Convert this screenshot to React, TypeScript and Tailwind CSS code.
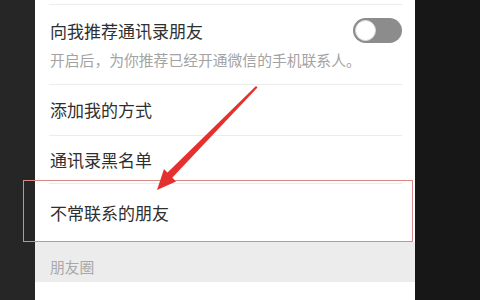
import React from "react";

const font = { fontFamily: '"Noto Sans CJK SC", "Noto Sans", sans-serif' };

function Divider() {
  return <div className="h-px bg-[#ececec] ml-[14px] mr-[13px]" />;
}

function Toggle() {
  return (
    <div className="w-[49px] h-[25px] rounded-full bg-[#8c8c8c] flex items-center px-[2px]">
      <div className="w-[21px] h-[21px] rounded-full bg-white border border-[#dcdcdc]" />
    </div>
  );
}

function Row({ label, className }: { label: string; className: string }) {
  return (
    <div className={`flex items-center pl-[15px] text-[17px] text-[#2f2f2f] ${className}`}>
      {label}
    </div>
  );
}

export default function App() {
  return (
    <div className="relative w-[480px] h-[300px] flex overflow-hidden" style={font}>
      <div className="w-[35px] bg-[#262626]" />

      <div className="flex-1 bg-white flex flex-col">
        <div className="h-[4px]" />
        <Divider />

        {/* recommend contacts */}
        <div className="h-[79px] pl-[15px] pr-[13px] pt-[13px]">
          <div className="flex items-center justify-between">
            <span className="text-[17px] text-[#2f2f2f]">向我推荐通讯录朋友</span>
            <Toggle />
          </div>
          <div className="mt-[5px] text-[14.8px] text-[#a3a3a3]">
            开启后，为你推荐已经开通微信的手机联系人。
          </div>
        </div>
        <Divider />

        <Row label="添加我的方式" className="h-[50px]" />
        <Divider />
        <Row label="通讯录黑名单" className="h-[47px]" />
        <Divider />
        <Row label="不常联系的朋友" className="h-[58px]" />

        <div className="h-[40px] bg-[#ececec] flex items-end pb-[4px] pl-[15px] text-[14.8px] text-[#a8a8a8]">
          朋友圈
        </div>
        <div className="flex-1 bg-white" />
      </div>

      <div className="w-[65px] bg-[#171717]" />

      {/* annotation box */}
      <div className="absolute left-[23px] top-[180px] w-[390px] h-[62px] border border-[#d98a88]" />

      {/* annotation arrow */}
      <svg className="absolute left-0 top-0" width="480" height="300" viewBox="0 0 480 300">
        <polygon points="256,86 257.5,87.5 171,179 166,174" fill="#e3312f" />
        <polygon points="157,190 176,181.5 164,169" fill="#e3312f" />
      </svg>
    </div>
  );
}
